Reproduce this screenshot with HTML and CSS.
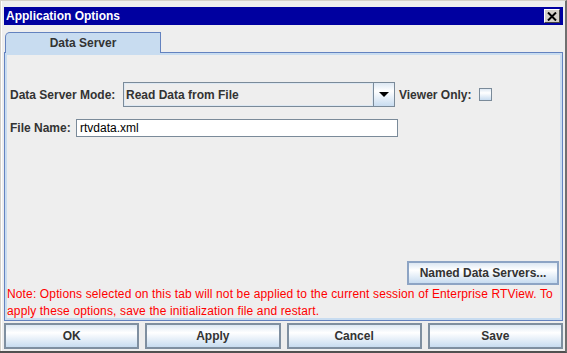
FILE: index.html
```html
<!DOCTYPE html>
<html lang="en">
<head>
    <meta charset="UTF-8">
    <title>Application Options</title>
    <link rel="stylesheet" href="styles.css">
</head>
<body>
    <div class="window">
        <div class="titlebar">
            <span class="title">Application Options</span>
            <span class="close">
                <svg width="10" height="9" viewBox="0 0 10 9"><path d="M1 0.5 L9 8.5 M9 0.5 L1 8.5" stroke="#000" stroke-width="2" fill="none"/></svg>
            </span>
        </div>
        <div class="tabs">
            <div class="tab">Data Server</div>
        </div>
        <div class="panel">
            <div class="row">
                <label class="label mode-label">Data Server Mode:</label>
                <div class="combo">
                    <span class="combo-value">Read Data from File</span>
                    <span class="combo-arrow">
                        <svg width="10" height="6" viewBox="0 0 10 6"><path d="M0 0 H10 L5 5 Z" fill="#000"/></svg>
                    </span>
                </div>
                <label class="label viewer-label">Viewer Only:</label>
                <span class="checkbox"></span>
            </div>
            <div class="row file-row">
                <label class="label file-label">File Name:</label>
                <div class="textfield">rtvdata.xml</div>
            </div>
            <div class="spacer"></div>
            <div class="named-row">
                <button class="btn named-btn">Named Data Servers...</button>
            </div>
            <p class="note">Note: Options selected on this tab will not be applied to the current session of Enterprise RTView. To<br>apply these options, save the initialization file and restart.</p>
        </div>
        <div class="actions">
            <button class="btn">OK</button>
            <button class="btn">Apply</button>
            <button class="btn">Cancel</button>
            <button class="btn">Save</button>
        </div>
    </div>
</body>
</html>
```

FILE: styles.css
```css
body {
    margin: 0;
    background-color: #eeeeee;
    font-family: "Liberation Sans", Arial, sans-serif;
    font-size: 12px;
    color: #333333;
}
.window {
    box-sizing: border-box;
    width: 567px;
    height: 353px;
    display: flex;
    flex-direction: column;
    padding: 6px 2px 2px 4px;
    border-top: 1px solid #d4d0c8;
    border-right: 2px solid #6f6f6f;
    border-bottom: 2px solid #505050;
    background-color: #eeeeee;
    box-shadow: inset 1px 0 0 #d4d0c8, inset 2px 0 0 #ffffff;
}
.titlebar {
    height: 18px;
    flex-shrink: 0;
    display: flex;
    align-items: center;
    justify-content: space-between;
    padding: 0 3px 0 2px;
    background-color: #0000a0;
    color: #ffffff;
    font-weight: bold;
}
.close {
    box-sizing: border-box;
    width: 16px;
    height: 14px;
    display: flex;
    align-items: center;
    justify-content: center;
    background-color: #d4d0c8;
    border-top: 1px solid #ffffff;
    border-left: 1px solid #ffffff;
    border-right: 1px solid #404040;
    border-bottom: 1px solid #404040;
}
.tabs {
    display: flex;
    height: 20px;
    flex-shrink: 0;
    margin-top: 7px;
    padding-left: 1px;
}
.tab {
    box-sizing: border-box;
    width: 156px;
    height: 21px;
    position: relative;
    z-index: 1;
    display: flex;
    align-items: center;
    justify-content: center;
    background-color: #c8dcf0;
    border: 1px solid #6382bf;
    border-bottom: 0;
    border-top-left-radius: 5px;
    font-weight: bold;
}
.panel {
    flex: 1;
    display: flex;
    flex-direction: column;
    padding: 29px 3px 0 2px;
    border: 1px solid #6382bf;
    box-shadow: inset 0 0 0 2px #c8dcf0;
}
.row {
    display: flex;
    align-items: center;
    height: 25px;
    margin-left: 3px;
}
.file-row {
    height: 18px;
    margin-top: 12px;
}
.label {
    font-weight: bold;
    white-space: nowrap;
}
.mode-label {
    width: 113px;
}
.file-label {
    width: 66px;
}
.viewer-label {
    width: 80px;
    margin-left: 4px;
}
.combo {
    box-sizing: border-box;
    width: 272px;
    height: 25px;
    display: flex;
    border: 1px solid #7a8a99;
}
.combo-value {
    flex: 1;
    display: flex;
    align-items: center;
    padding-left: 2px;
    font-weight: bold;
    box-shadow: inset 0 0 0 1px #dde8f3;
}
.combo-arrow {
    width: 20px;
    display: flex;
    align-items: center;
    justify-content: center;
    border-left: 1px solid #7a8a99;
    background: linear-gradient(#dde8f3, #ffffff 35%, #c8dcf0);
}
.checkbox {
    box-sizing: border-box;
    width: 13px;
    height: 13px;
    border: 1px solid #7a8a99;
    background: linear-gradient(#dde8f3, #ffffff 35%, #c8dcf0);
}
.textfield {
    box-sizing: border-box;
    width: 322px;
    height: 18px;
    padding-left: 3px;
    line-height: 16px;
    background-color: #ffffff;
    border: 1px solid #7a8a99;
    color: #000000;
}
.spacer {
    flex: 1;
}
.named-row {
    display: flex;
    justify-content: flex-end;
    margin-bottom: 1px;
}
.btn {
    box-sizing: border-box;
    height: 26px;
    margin: 0;
    padding: 0;
    font-family: "Liberation Sans", Arial, sans-serif;
    font-size: 12px;
    font-weight: bold;
    color: #333333;
    border: 2px solid #7f8fa0;
    background: linear-gradient(#dde8f3, #ffffff 35%, #c8dcf0);
}
.named-btn {
    width: 152px;
    height: 24px;
    border-color: #8da4c4;
}
.note {
    margin: 0;
    line-height: 17px;
    letter-spacing: 0.14px;
    color: #ff0000;
}
.actions {
    display: grid;
    grid-template-columns: repeat(4, 1fr);
    gap: 6px;
    height: 26px;
    flex-shrink: 0;
    margin-top: 2px;
}
```
